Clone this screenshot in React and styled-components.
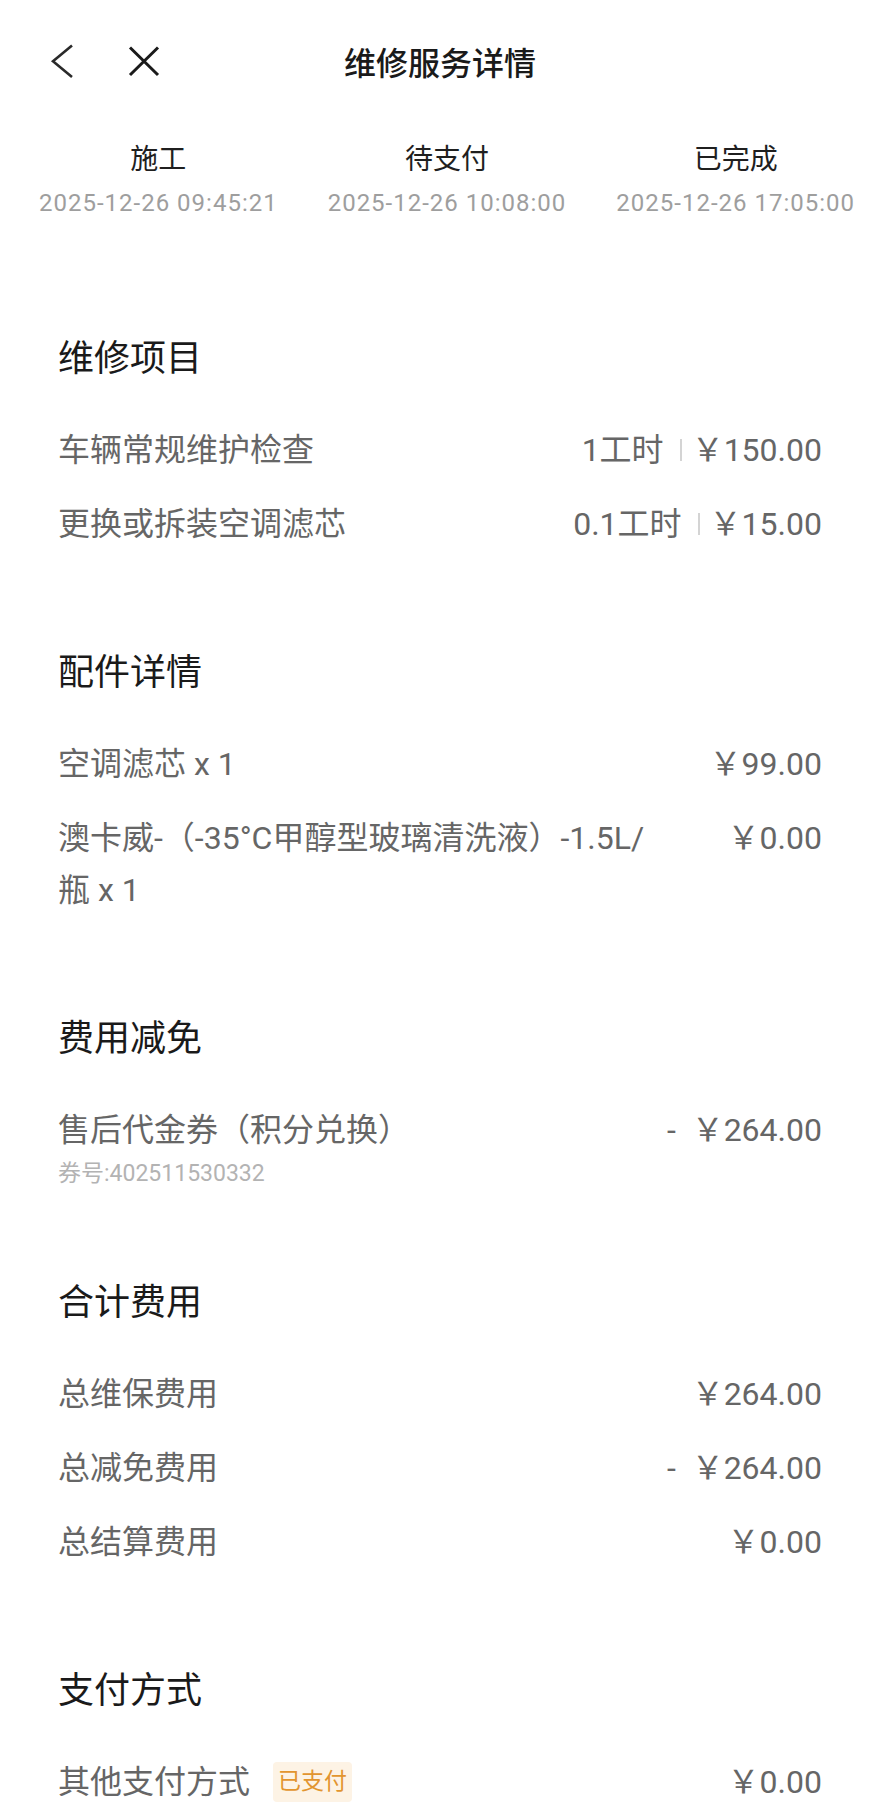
import React from 'react';
import styled, { createGlobalStyle } from 'styled-components';

const GlobalStyle = createGlobalStyle`
  html, body {
    margin: 0;
    padding: 0;
    background: #ffffff;
  }
  body {
    font-family: "Roboto", "Noto Sans CJK SC", "Noto Sans", sans-serif;
    -webkit-font-smoothing: antialiased;
  }
`;

const steps = [
  { name: '施工', time: '2025-12-26 09:45:21' },
  { name: '待支付', time: '2025-12-26 10:08:00' },
  { name: '已完成', time: '2025-12-26 17:05:00' },
];

const BackIcon = () => (
  <svg width="40" height="40" viewBox="0 0 40 40" fill="none">
    <path d="M30 4.5 L11 20.3 L30 36" stroke="#2a2a2a" strokeWidth="2.6" />
  </svg>
);

const CloseIcon = () => (
  <svg width="40" height="40" viewBox="0 0 40 40" fill="none">
    <path d="M6 6.5 L34 34 M34 6.5 L6 34" stroke="#1a1a1a" strokeWidth="3" />
  </svg>
);

const App = () => {
  return (
    <Page>
      <GlobalStyle />
      <Header>
        <IconGroup>
          <BackIcon />
          <CloseIcon />
        </IconGroup>
        <Title>维修服务详情</Title>
        <div />
      </Header>

      <Steps>
        {steps.map(step => (
          <Step key={step.name}>
            <StepName>{step.name}</StepName>
            <StepTime>{step.time}</StepTime>
          </Step>
        ))}
      </Steps>

      <Sections>
        <Section>
          <SectionTitle>维修项目</SectionTitle>
          <Rows>
            <Row>
              <Label>车辆常规维护检查</Label>
              <Value>1工时<Sep />￥150.00</Value>
            </Row>
            <Row>
              <Label>更换或拆装空调滤芯</Label>
              <Value>0.1工时<Sep />￥15.00</Value>
            </Row>
          </Rows>
        </Section>

        <Section>
          <SectionTitle>配件详情</SectionTitle>
          <Rows>
            <Row>
              <Label>空调滤芯 x 1</Label>
              <Value>￥99.00</Value>
            </Row>
            <Row>
              <Label>澳卡威-（-35°C甲醇型玻璃清洗液）-1.5L/瓶 x 1</Label>
              <Value>￥0.00</Value>
            </Row>
          </Rows>
        </Section>

        <Section>
          <SectionTitle>费用减免</SectionTitle>
          <Rows>
            <Row>
              <LabelBlock>
                <Label>售后代金券（积分兑换）</Label>
                <SubText>券号:402511530332</SubText>
              </LabelBlock>
              <Value>-&nbsp;&nbsp;￥264.00</Value>
            </Row>
          </Rows>
        </Section>

        <Section>
          <SectionTitle>合计费用</SectionTitle>
          <Rows>
            <Row>
              <Label>总维保费用</Label>
              <Value>￥264.00</Value>
            </Row>
            <Row>
              <Label>总减免费用</Label>
              <Value>-&nbsp;&nbsp;￥264.00</Value>
            </Row>
            <Row>
              <Label>总结算费用</Label>
              <Value>￥0.00</Value>
            </Row>
          </Rows>
        </Section>

        <Section>
          <SectionTitle>支付方式</SectionTitle>
          <Rows>
            <Row>
              <Label>
                其他支付方式<Badge>已支付</Badge>
              </Label>
              <Value>￥0.00</Value>
            </Row>
          </Rows>
        </Section>
      </Sections>
    </Page>
  );
};

// Styled Components
const Page = styled.div`
  width: 880px;
  background: #ffffff;
`;

const Header = styled.div`
  height: 128px;
  display: grid;
  grid-template-columns: 1fr auto 1fr;
  align-items: center;
`;

const IconGroup = styled.div`
  display: flex;
  align-items: center;
  gap: 42px;
  padding-left: 42px;
  margin-top: -6px;

  svg {
    display: block;
  }
`;

const Title = styled.div`
  font-size: 32px;
  line-height: 44px;
  font-weight: 500;
  color: #1a1a1a;
`;

const Steps = styled.div`
  display: flex;
  padding: 14px 0 0 14px;
`;

const Step = styled.div`
  flex: 1;
  display: flex;
  flex-direction: column;
  align-items: center;
`;

const StepName = styled.div`
  font-size: 28px;
  line-height: 36px;
  color: #1f1f1f;
`;

const StepTime = styled.div`
  margin-top: 9px;
  font-size: 24px;
  line-height: 32px;
  letter-spacing: 1px;
  color: #9e9e9e;
  white-space: nowrap;
`;

const Sections = styled.div`
  display: flex;
  flex-direction: column;
  gap: 98px;
  padding: 115px 58px 0;
`;

const Section = styled.div`
  display: flex;
  flex-direction: column;
`;

const SectionTitle = styled.div`
  font-size: 36px;
  line-height: 50px;
  color: #1a1a1a;
  margin-bottom: 40px;
`;

const Rows = styled.div`
  display: flex;
  flex-direction: column;
  gap: 22px;
`;

const Row = styled.div`
  display: flex;
  justify-content: space-between;
  align-items: flex-start;
  gap: 60px;
`;

const LabelBlock = styled.div`
  display: flex;
  flex-direction: column;
`;

const Label = styled.div`
  display: flex;
  align-items: center;
  flex-wrap: wrap;
  font-size: 32px;
  line-height: 52px;
  color: #666666;
`;

const SubText = styled.div`
  font-size: 23px;
  line-height: 22px;
  color: #b3b3b3;
  margin: 7px 0 -5px;
`;

const Value = styled.div`
  display: flex;
  align-items: center;
  flex-shrink: 0;
  white-space: nowrap;
  font-size: 32px;
  line-height: 52px;
  color: #666666;
`;

const Sep = styled.span`
  display: block;
  flex-shrink: 0;
  width: 2px;
  height: 22px;
  margin: 0 10px 0 16px;
  background: #d4d4d4;
`;

const Badge = styled.span`
  display: inline-block;
  margin-left: 23px;
  padding: 0 5px;
  height: 40px;
  line-height: 40px;
  font-size: 23px;
  color: #e2952f;
  background: #fdf3e5;
  border-radius: 4px;
`;

export default App;
